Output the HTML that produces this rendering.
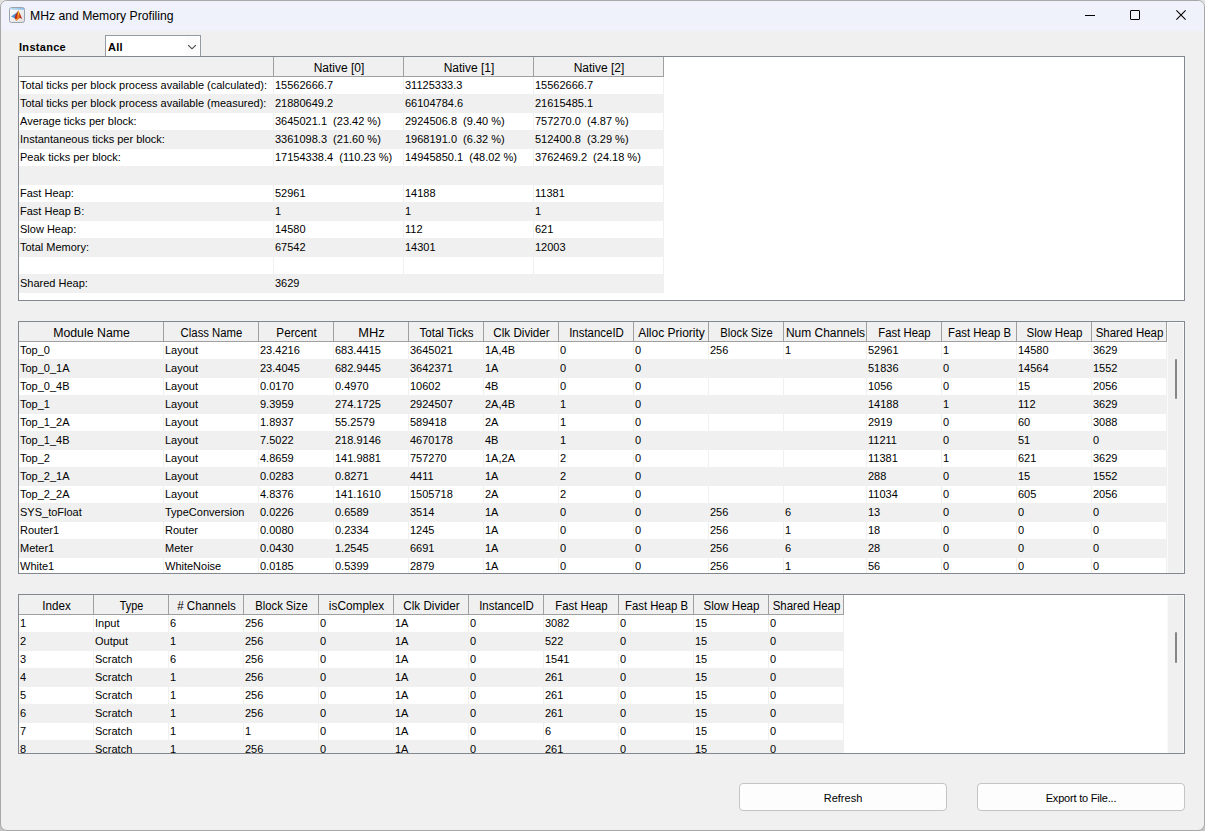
<!DOCTYPE html><html><head><meta charset="utf-8"><title>MHz and Memory Profiling</title><style>
*{margin:0;padding:0;box-sizing:content-box}
html,body{width:1205px;height:831px;overflow:hidden;background:linear-gradient(#e2e2e2,#c4c4c4);font-family:"Liberation Sans",sans-serif;color:#000}
#win{position:absolute;left:0;top:0;width:1203px;height:829px;border:1px solid #a8a8a8;border-radius:7px;background:#f0f0f0;overflow:hidden}
#title{position:absolute;left:0;top:0;width:1203px;height:30px;background:#eff2fa}
#ttxt{position:absolute;left:29px;top:8px;font-size:12.2px;line-height:15px;white-space:nowrap}
.tb{position:absolute;border:1px solid #828790;background:#fff;overflow:hidden}
.hbg{position:absolute;background:#f0f0f0}
.row{position:absolute;left:0;height:17px;border-bottom:1px solid #f0f0f0}
.cd{position:absolute;width:1px;background:#f0f0f0}
.hd{position:absolute;width:1px;background:#a0a0a0}
.hb{position:absolute;height:1px;background:#a0a0a0}
.ht{position:absolute;top:4px;text-align:center;font-size:12px;line-height:14px;white-space:nowrap}
.ct{position:absolute;font-size:11px;line-height:14px;padding-top:1px;white-space:nowrap}
.sb{position:absolute;background:#f0f0f0;border:1px solid #fafafa;border-bottom:none}
.sbl{position:absolute;width:1px;background:#fff}
.th{position:absolute;width:2px;background:#868686;border-radius:1px}
.btn{position:absolute;border:1px solid #c4c4c4;border-radius:4px;background:#fdfdfd;font-size:11px;text-align:center;line-height:28px}
</style></head><body>
<div id="win">
<div id="title">
<svg style="position:absolute;left:7px;top:5px" width="18" height="18" viewBox="0 0 18 18">
<defs><linearGradient id="ig" x1="0" y1="0" x2="1" y2="1"><stop offset="0" stop-color="#ffffff"/><stop offset="1" stop-color="#dedede"/></linearGradient>
<linearGradient id="bd" x1="0" y1="0" x2="1" y2="0"><stop offset="0" stop-color="#b0d8f4"/><stop offset="1" stop-color="#78b0de"/></linearGradient>
<linearGradient id="bw" x1="0" y1="0" x2="1" y2="1"><stop offset="0" stop-color="#6ab4ea"/><stop offset="1" stop-color="#2f74b8"/></linearGradient></defs>
<rect x="1.5" y="1.5" width="15" height="15" rx="2" fill="url(#ig)" stroke="#9aa3ad"/>
<rect x="2" y="2.2" width="14" height="1.4" fill="url(#bd)"/>
<path d="M3 10.4 L8.8 6.4 L10 9 L7 12.4 Z" fill="url(#bw)"/>
<path d="M7.2 9.4 L10.3 4.6 L12.2 8.2 L14.2 13 L12.2 11.9 L10.6 12.2 L8.2 14.8 L6.8 12 Z" fill="#b52c1a"/>
<path d="M9 10.6 L10.3 5 L11.6 9 L11.6 12 L8.6 14.6 Z" fill="#ea7424"/>
<path d="M9.9 6.4 L10.4 4.8 L11.2 7 L10.8 9.6 L10.1 9 Z" fill="#f5c52a"/>
<circle cx="8.6" cy="13.6" r="0.9" fill="#f4aa2c"/>
</svg>
<div id="ttxt">MHz and Memory Profiling</div>
<div style="position:absolute;left:1084px;top:14px;width:10px;height:1px;background:#000"></div>
<div style="position:absolute;left:1129px;top:9px;width:8px;height:8px;border:1px solid #000;border-radius:1px"></div>
<svg style="position:absolute;left:1174px;top:8px" width="12" height="12" viewBox="0 0 12 12"><path d="M1.4 1.4 L10.6 10.6 M10.6 1.4 L1.4 10.6" stroke="#000" stroke-width="1.1"/></svg>
</div>
</div>
<div style="position:absolute;left:19px;top:40px;font-size:11px;font-weight:bold;line-height:15px;letter-spacing:0.3px">Instance</div>
<div style="position:absolute;left:105px;top:35px;width:94px;height:21px;border:1px solid #959ba4;border-bottom:none;background:#fff"><div style="position:absolute;left:79px;top:1px;width:14px;height:18px;background:#fbfbfb"></div></div>
<div style="position:absolute;left:108px;top:40px;font-size:11px;font-weight:bold;line-height:15px;letter-spacing:0.3px">All</div>
<svg style="position:absolute;left:187px;top:44px" width="10" height="6" viewBox="0 0 10 6"><path d="M1.2 1.2 L5 4.8 L8.8 1.2" stroke="#444" fill="none" stroke-width="1.15"/></svg>
<div class="tb" style="left:18px;top:56px;width:1165px;height:243px">
<div class="hbg" style="left:0;top:0;width:644px;height:19px"></div>
<div class="row" style="top:20px;width:644px;background:#ffffff"></div>
<div class="row" style="top:38px;width:644px;background:#f0f0f0"></div>
<div class="row" style="top:56px;width:644px;background:#ffffff"></div>
<div class="row" style="top:74px;width:644px;background:#f0f0f0"></div>
<div class="row" style="top:92px;width:644px;background:#ffffff"></div>
<div class="row" style="top:110px;width:644px;background:#f0f0f0"></div>
<div class="row" style="top:128px;width:644px;background:#ffffff"></div>
<div class="row" style="top:146px;width:644px;background:#f0f0f0"></div>
<div class="row" style="top:164px;width:644px;background:#ffffff"></div>
<div class="row" style="top:182px;width:644px;background:#f0f0f0"></div>
<div class="row" style="top:200px;width:644px;background:#ffffff"></div>
<div class="row" style="top:218px;width:644px;background:#f0f0f0"></div>
<div class="cd" style="left:254px;top:20px;height:216px"></div>
<div class="cd" style="left:384px;top:20px;height:216px"></div>
<div class="cd" style="left:514px;top:20px;height:216px"></div>
<div class="cd" style="left:644px;top:20px;height:216px"></div>
<div class="hd" style="left:254px;top:0;height:19px"></div>
<div class="hd" style="left:384px;top:0;height:19px"></div>
<div class="hd" style="left:514px;top:0;height:19px"></div>
<div class="hd" style="left:644px;top:0;height:19px"></div>
<div class="hb" style="left:0;top:19px;width:645px"></div>
<div class="ht" style="left:255px;width:130px">Native [0]</div>
<div class="ht" style="left:385px;width:130px">Native [1]</div>
<div class="ht" style="left:515px;width:130px">Native [2]</div>
<div class="ct" style="left:1px;top:20px">Total ticks per block process available (calculated):</div>
<div class="ct" style="left:256px;top:20px">15562666.7</div>
<div class="ct" style="left:386px;top:20px">31125333.3</div>
<div class="ct" style="left:516px;top:20px">15562666.7</div>
<div class="ct" style="left:1px;top:38px">Total ticks per block process available (measured):</div>
<div class="ct" style="left:256px;top:38px">21880649.2</div>
<div class="ct" style="left:386px;top:38px">66104784.6</div>
<div class="ct" style="left:516px;top:38px">21615485.1</div>
<div class="ct" style="left:1px;top:56px">Average ticks per block:</div>
<div class="ct" style="left:256px;top:56px">3645021.1&nbsp; (23.42 %)</div>
<div class="ct" style="left:386px;top:56px">2924506.8&nbsp; (9.40 %)</div>
<div class="ct" style="left:516px;top:56px">757270.0&nbsp; (4.87 %)</div>
<div class="ct" style="left:1px;top:74px">Instantaneous ticks per block:</div>
<div class="ct" style="left:256px;top:74px">3361098.3&nbsp; (21.60 %)</div>
<div class="ct" style="left:386px;top:74px">1968191.0&nbsp; (6.32 %)</div>
<div class="ct" style="left:516px;top:74px">512400.8&nbsp; (3.29 %)</div>
<div class="ct" style="left:1px;top:92px">Peak ticks per block:</div>
<div class="ct" style="left:256px;top:92px">17154338.4&nbsp; (110.23 %)</div>
<div class="ct" style="left:386px;top:92px">14945850.1&nbsp; (48.02 %)</div>
<div class="ct" style="left:516px;top:92px">3762469.2&nbsp; (24.18 %)</div>
<div class="ct" style="left:1px;top:128px">Fast Heap:</div>
<div class="ct" style="left:256px;top:128px">52961</div>
<div class="ct" style="left:386px;top:128px">14188</div>
<div class="ct" style="left:516px;top:128px">11381</div>
<div class="ct" style="left:1px;top:146px">Fast Heap B:</div>
<div class="ct" style="left:256px;top:146px">1</div>
<div class="ct" style="left:386px;top:146px">1</div>
<div class="ct" style="left:516px;top:146px">1</div>
<div class="ct" style="left:1px;top:164px">Slow Heap:</div>
<div class="ct" style="left:256px;top:164px">14580</div>
<div class="ct" style="left:386px;top:164px">112</div>
<div class="ct" style="left:516px;top:164px">621</div>
<div class="ct" style="left:1px;top:182px">Total Memory:</div>
<div class="ct" style="left:256px;top:182px">67542</div>
<div class="ct" style="left:386px;top:182px">14301</div>
<div class="ct" style="left:516px;top:182px">12003</div>
<div class="ct" style="left:1px;top:218px">Shared Heap:</div>
<div class="ct" style="left:256px;top:218px">3629</div>
</div>
<div class="tb" style="left:18px;top:321px;width:1165px;height:251px">
<div class="sb" style="left:1148px;top:0;width:15px;height:250px"></div>
<div class="hbg" style="left:0;top:0;width:1147px;height:19px"></div>
<div class="row" style="top:20px;width:1147px;background:#ffffff"></div>
<div class="row" style="top:38px;width:1147px;background:#f0f0f0"></div>
<div class="row" style="top:56px;width:1147px;background:#ffffff"></div>
<div class="row" style="top:74px;width:1147px;background:#f0f0f0"></div>
<div class="row" style="top:92px;width:1147px;background:#ffffff"></div>
<div class="row" style="top:110px;width:1147px;background:#f0f0f0"></div>
<div class="row" style="top:128px;width:1147px;background:#ffffff"></div>
<div class="row" style="top:146px;width:1147px;background:#f0f0f0"></div>
<div class="row" style="top:164px;width:1147px;background:#ffffff"></div>
<div class="row" style="top:182px;width:1147px;background:#f0f0f0"></div>
<div class="row" style="top:200px;width:1147px;background:#ffffff"></div>
<div class="row" style="top:218px;width:1147px;background:#f0f0f0"></div>
<div class="row" style="top:236px;width:1147px;background:#ffffff"></div>
<div class="cd" style="left:144px;top:20px;height:231px"></div>
<div class="cd" style="left:239px;top:20px;height:231px"></div>
<div class="cd" style="left:314px;top:20px;height:231px"></div>
<div class="cd" style="left:389px;top:20px;height:231px"></div>
<div class="cd" style="left:464px;top:20px;height:231px"></div>
<div class="cd" style="left:539px;top:20px;height:231px"></div>
<div class="cd" style="left:614px;top:20px;height:231px"></div>
<div class="cd" style="left:689px;top:20px;height:231px"></div>
<div class="cd" style="left:764px;top:20px;height:231px"></div>
<div class="cd" style="left:847px;top:20px;height:231px"></div>
<div class="cd" style="left:922px;top:20px;height:231px"></div>
<div class="cd" style="left:997px;top:20px;height:231px"></div>
<div class="cd" style="left:1072px;top:20px;height:231px"></div>
<div class="cd" style="left:1147px;top:20px;height:231px"></div>
<div class="hd" style="left:144px;top:0;height:19px"></div>
<div class="hd" style="left:239px;top:0;height:19px"></div>
<div class="hd" style="left:314px;top:0;height:19px"></div>
<div class="hd" style="left:389px;top:0;height:19px"></div>
<div class="hd" style="left:464px;top:0;height:19px"></div>
<div class="hd" style="left:539px;top:0;height:19px"></div>
<div class="hd" style="left:614px;top:0;height:19px"></div>
<div class="hd" style="left:689px;top:0;height:19px"></div>
<div class="hd" style="left:764px;top:0;height:19px"></div>
<div class="hd" style="left:847px;top:0;height:19px"></div>
<div class="hd" style="left:922px;top:0;height:19px"></div>
<div class="hd" style="left:997px;top:0;height:19px"></div>
<div class="hd" style="left:1072px;top:0;height:19px"></div>
<div class="hd" style="left:1147px;top:0;height:19px"></div>
<div class="hb" style="left:0;top:19px;width:1148px"></div>
<div class="ht" style="left:0px;width:145px;transform:scaleX(1.027)">Module Name</div>
<div class="ht" style="left:145px;width:95px;transform:scaleX(0.945)">Class Name</div>
<div class="ht" style="left:240px;width:75px;transform:scaleX(0.975)">Percent</div>
<div class="ht" style="left:315px;width:75px;transform:scaleX(1.07)">MHz</div>
<div class="ht" style="left:390px;width:75px;transform:scaleX(0.964)">Total Ticks</div>
<div class="ht" style="left:465px;width:75px;transform:scaleX(0.972)">Clk Divider</div>
<div class="ht" style="left:540px;width:75px;transform:scaleX(0.954)">InstanceID</div>
<div class="ht" style="left:615px;width:75px">Alloc Priority</div>
<div class="ht" style="left:690px;width:75px;transform:scaleX(0.935)">Block Size</div>
<div class="ht" style="left:765px;width:83px;transform:scaleX(0.996)">Num Channels</div>
<div class="ht" style="left:848px;width:75px;transform:scaleX(0.944)">Fast Heap</div>
<div class="ht" style="left:923px;width:75px;transform:scaleX(0.945)">Fast Heap B</div>
<div class="ht" style="left:998px;width:75px;transform:scaleX(0.965)">Slow Heap</div>
<div class="ht" style="left:1073px;width:75px;transform:scaleX(0.957)">Shared Heap</div>
<div class="ct" style="left:1px;top:20px">Top_0</div>
<div class="ct" style="left:146px;top:20px">Layout</div>
<div class="ct" style="left:241px;top:20px">23.4216</div>
<div class="ct" style="left:316px;top:20px">683.4415</div>
<div class="ct" style="left:391px;top:20px">3645021</div>
<div class="ct" style="left:466px;top:20px">1A,4B</div>
<div class="ct" style="left:541px;top:20px">0</div>
<div class="ct" style="left:616px;top:20px">0</div>
<div class="ct" style="left:691px;top:20px">256</div>
<div class="ct" style="left:766px;top:20px">1</div>
<div class="ct" style="left:849px;top:20px">52961</div>
<div class="ct" style="left:924px;top:20px">1</div>
<div class="ct" style="left:999px;top:20px">14580</div>
<div class="ct" style="left:1074px;top:20px">3629</div>
<div class="ct" style="left:1px;top:38px">Top_0_1A</div>
<div class="ct" style="left:146px;top:38px">Layout</div>
<div class="ct" style="left:241px;top:38px">23.4045</div>
<div class="ct" style="left:316px;top:38px">682.9445</div>
<div class="ct" style="left:391px;top:38px">3642371</div>
<div class="ct" style="left:466px;top:38px">1A</div>
<div class="ct" style="left:541px;top:38px">0</div>
<div class="ct" style="left:616px;top:38px">0</div>
<div class="ct" style="left:849px;top:38px">51836</div>
<div class="ct" style="left:924px;top:38px">0</div>
<div class="ct" style="left:999px;top:38px">14564</div>
<div class="ct" style="left:1074px;top:38px">1552</div>
<div class="ct" style="left:1px;top:56px">Top_0_4B</div>
<div class="ct" style="left:146px;top:56px">Layout</div>
<div class="ct" style="left:241px;top:56px">0.0170</div>
<div class="ct" style="left:316px;top:56px">0.4970</div>
<div class="ct" style="left:391px;top:56px">10602</div>
<div class="ct" style="left:466px;top:56px">4B</div>
<div class="ct" style="left:541px;top:56px">0</div>
<div class="ct" style="left:616px;top:56px">0</div>
<div class="ct" style="left:849px;top:56px">1056</div>
<div class="ct" style="left:924px;top:56px">0</div>
<div class="ct" style="left:999px;top:56px">15</div>
<div class="ct" style="left:1074px;top:56px">2056</div>
<div class="ct" style="left:1px;top:74px">Top_1</div>
<div class="ct" style="left:146px;top:74px">Layout</div>
<div class="ct" style="left:241px;top:74px">9.3959</div>
<div class="ct" style="left:316px;top:74px">274.1725</div>
<div class="ct" style="left:391px;top:74px">2924507</div>
<div class="ct" style="left:466px;top:74px">2A,4B</div>
<div class="ct" style="left:541px;top:74px">1</div>
<div class="ct" style="left:616px;top:74px">0</div>
<div class="ct" style="left:849px;top:74px">14188</div>
<div class="ct" style="left:924px;top:74px">1</div>
<div class="ct" style="left:999px;top:74px">112</div>
<div class="ct" style="left:1074px;top:74px">3629</div>
<div class="ct" style="left:1px;top:92px">Top_1_2A</div>
<div class="ct" style="left:146px;top:92px">Layout</div>
<div class="ct" style="left:241px;top:92px">1.8937</div>
<div class="ct" style="left:316px;top:92px">55.2579</div>
<div class="ct" style="left:391px;top:92px">589418</div>
<div class="ct" style="left:466px;top:92px">2A</div>
<div class="ct" style="left:541px;top:92px">1</div>
<div class="ct" style="left:616px;top:92px">0</div>
<div class="ct" style="left:849px;top:92px">2919</div>
<div class="ct" style="left:924px;top:92px">0</div>
<div class="ct" style="left:999px;top:92px">60</div>
<div class="ct" style="left:1074px;top:92px">3088</div>
<div class="ct" style="left:1px;top:110px">Top_1_4B</div>
<div class="ct" style="left:146px;top:110px">Layout</div>
<div class="ct" style="left:241px;top:110px">7.5022</div>
<div class="ct" style="left:316px;top:110px">218.9146</div>
<div class="ct" style="left:391px;top:110px">4670178</div>
<div class="ct" style="left:466px;top:110px">4B</div>
<div class="ct" style="left:541px;top:110px">1</div>
<div class="ct" style="left:616px;top:110px">0</div>
<div class="ct" style="left:849px;top:110px">11211</div>
<div class="ct" style="left:924px;top:110px">0</div>
<div class="ct" style="left:999px;top:110px">51</div>
<div class="ct" style="left:1074px;top:110px">0</div>
<div class="ct" style="left:1px;top:128px">Top_2</div>
<div class="ct" style="left:146px;top:128px">Layout</div>
<div class="ct" style="left:241px;top:128px">4.8659</div>
<div class="ct" style="left:316px;top:128px">141.9881</div>
<div class="ct" style="left:391px;top:128px">757270</div>
<div class="ct" style="left:466px;top:128px">1A,2A</div>
<div class="ct" style="left:541px;top:128px">2</div>
<div class="ct" style="left:616px;top:128px">0</div>
<div class="ct" style="left:849px;top:128px">11381</div>
<div class="ct" style="left:924px;top:128px">1</div>
<div class="ct" style="left:999px;top:128px">621</div>
<div class="ct" style="left:1074px;top:128px">3629</div>
<div class="ct" style="left:1px;top:146px">Top_2_1A</div>
<div class="ct" style="left:146px;top:146px">Layout</div>
<div class="ct" style="left:241px;top:146px">0.0283</div>
<div class="ct" style="left:316px;top:146px">0.8271</div>
<div class="ct" style="left:391px;top:146px">4411</div>
<div class="ct" style="left:466px;top:146px">1A</div>
<div class="ct" style="left:541px;top:146px">2</div>
<div class="ct" style="left:616px;top:146px">0</div>
<div class="ct" style="left:849px;top:146px">288</div>
<div class="ct" style="left:924px;top:146px">0</div>
<div class="ct" style="left:999px;top:146px">15</div>
<div class="ct" style="left:1074px;top:146px">1552</div>
<div class="ct" style="left:1px;top:164px">Top_2_2A</div>
<div class="ct" style="left:146px;top:164px">Layout</div>
<div class="ct" style="left:241px;top:164px">4.8376</div>
<div class="ct" style="left:316px;top:164px">141.1610</div>
<div class="ct" style="left:391px;top:164px">1505718</div>
<div class="ct" style="left:466px;top:164px">2A</div>
<div class="ct" style="left:541px;top:164px">2</div>
<div class="ct" style="left:616px;top:164px">0</div>
<div class="ct" style="left:849px;top:164px">11034</div>
<div class="ct" style="left:924px;top:164px">0</div>
<div class="ct" style="left:999px;top:164px">605</div>
<div class="ct" style="left:1074px;top:164px">2056</div>
<div class="ct" style="left:1px;top:182px">SYS_toFloat</div>
<div class="ct" style="left:146px;top:182px">TypeConversion</div>
<div class="ct" style="left:241px;top:182px">0.0226</div>
<div class="ct" style="left:316px;top:182px">0.6589</div>
<div class="ct" style="left:391px;top:182px">3514</div>
<div class="ct" style="left:466px;top:182px">1A</div>
<div class="ct" style="left:541px;top:182px">0</div>
<div class="ct" style="left:616px;top:182px">0</div>
<div class="ct" style="left:691px;top:182px">256</div>
<div class="ct" style="left:766px;top:182px">6</div>
<div class="ct" style="left:849px;top:182px">13</div>
<div class="ct" style="left:924px;top:182px">0</div>
<div class="ct" style="left:999px;top:182px">0</div>
<div class="ct" style="left:1074px;top:182px">0</div>
<div class="ct" style="left:1px;top:200px">Router1</div>
<div class="ct" style="left:146px;top:200px">Router</div>
<div class="ct" style="left:241px;top:200px">0.0080</div>
<div class="ct" style="left:316px;top:200px">0.2334</div>
<div class="ct" style="left:391px;top:200px">1245</div>
<div class="ct" style="left:466px;top:200px">1A</div>
<div class="ct" style="left:541px;top:200px">0</div>
<div class="ct" style="left:616px;top:200px">0</div>
<div class="ct" style="left:691px;top:200px">256</div>
<div class="ct" style="left:766px;top:200px">1</div>
<div class="ct" style="left:849px;top:200px">18</div>
<div class="ct" style="left:924px;top:200px">0</div>
<div class="ct" style="left:999px;top:200px">0</div>
<div class="ct" style="left:1074px;top:200px">0</div>
<div class="ct" style="left:1px;top:218px">Meter1</div>
<div class="ct" style="left:146px;top:218px">Meter</div>
<div class="ct" style="left:241px;top:218px">0.0430</div>
<div class="ct" style="left:316px;top:218px">1.2545</div>
<div class="ct" style="left:391px;top:218px">6691</div>
<div class="ct" style="left:466px;top:218px">1A</div>
<div class="ct" style="left:541px;top:218px">0</div>
<div class="ct" style="left:616px;top:218px">0</div>
<div class="ct" style="left:691px;top:218px">256</div>
<div class="ct" style="left:766px;top:218px">6</div>
<div class="ct" style="left:849px;top:218px">28</div>
<div class="ct" style="left:924px;top:218px">0</div>
<div class="ct" style="left:999px;top:218px">0</div>
<div class="ct" style="left:1074px;top:218px">0</div>
<div class="ct" style="left:1px;top:236px">White1</div>
<div class="ct" style="left:146px;top:236px">WhiteNoise</div>
<div class="ct" style="left:241px;top:236px">0.0185</div>
<div class="ct" style="left:316px;top:236px">0.5399</div>
<div class="ct" style="left:391px;top:236px">2879</div>
<div class="ct" style="left:466px;top:236px">1A</div>
<div class="ct" style="left:541px;top:236px">0</div>
<div class="ct" style="left:616px;top:236px">0</div>
<div class="ct" style="left:691px;top:236px">256</div>
<div class="ct" style="left:766px;top:236px">1</div>
<div class="ct" style="left:849px;top:236px">56</div>
<div class="ct" style="left:924px;top:236px">0</div>
<div class="ct" style="left:999px;top:236px">0</div>
<div class="ct" style="left:1074px;top:236px">0</div>
<div class="th" style="left:1156px;top:37px;height:40px"></div>
</div>
<div class="tb" style="left:18px;top:594px;width:1165px;height:158px">
<div class="sb" style="left:1148px;top:0;width:15px;height:157px"></div>
<div class="hbg" style="left:0;top:0;width:824px;height:19px"></div>
<div class="row" style="top:20px;width:824px;background:#ffffff"></div>
<div class="row" style="top:38px;width:824px;background:#f0f0f0"></div>
<div class="row" style="top:56px;width:824px;background:#ffffff"></div>
<div class="row" style="top:74px;width:824px;background:#f0f0f0"></div>
<div class="row" style="top:92px;width:824px;background:#ffffff"></div>
<div class="row" style="top:110px;width:824px;background:#f0f0f0"></div>
<div class="row" style="top:128px;width:824px;background:#ffffff"></div>
<div class="row" style="top:146px;width:824px;background:#f0f0f0"></div>
<div class="cd" style="left:74px;top:20px;height:138px"></div>
<div class="cd" style="left:149px;top:20px;height:138px"></div>
<div class="cd" style="left:224px;top:20px;height:138px"></div>
<div class="cd" style="left:299px;top:20px;height:138px"></div>
<div class="cd" style="left:374px;top:20px;height:138px"></div>
<div class="cd" style="left:449px;top:20px;height:138px"></div>
<div class="cd" style="left:524px;top:20px;height:138px"></div>
<div class="cd" style="left:599px;top:20px;height:138px"></div>
<div class="cd" style="left:674px;top:20px;height:138px"></div>
<div class="cd" style="left:749px;top:20px;height:138px"></div>
<div class="cd" style="left:824px;top:20px;height:138px"></div>
<div class="hd" style="left:74px;top:0;height:19px"></div>
<div class="hd" style="left:149px;top:0;height:19px"></div>
<div class="hd" style="left:224px;top:0;height:19px"></div>
<div class="hd" style="left:299px;top:0;height:19px"></div>
<div class="hd" style="left:374px;top:0;height:19px"></div>
<div class="hd" style="left:449px;top:0;height:19px"></div>
<div class="hd" style="left:524px;top:0;height:19px"></div>
<div class="hd" style="left:599px;top:0;height:19px"></div>
<div class="hd" style="left:674px;top:0;height:19px"></div>
<div class="hd" style="left:749px;top:0;height:19px"></div>
<div class="hd" style="left:824px;top:0;height:19px"></div>
<div class="hb" style="left:0;top:19px;width:825px"></div>
<div class="ht" style="left:0px;width:75px;transform:scaleX(0.971)">Index</div>
<div class="ht" style="left:75px;width:75px;transform:scaleX(0.9)">Type</div>
<div class="ht" style="left:150px;width:75px;transform:scaleX(0.967)"># Channels</div>
<div class="ht" style="left:225px;width:75px;transform:scaleX(0.935)">Block Size</div>
<div class="ht" style="left:300px;width:75px;transform:scaleX(0.987)">isComplex</div>
<div class="ht" style="left:375px;width:75px;transform:scaleX(0.972)">Clk Divider</div>
<div class="ht" style="left:450px;width:75px;transform:scaleX(0.954)">InstanceID</div>
<div class="ht" style="left:525px;width:75px;transform:scaleX(0.944)">Fast Heap</div>
<div class="ht" style="left:600px;width:75px;transform:scaleX(0.945)">Fast Heap B</div>
<div class="ht" style="left:675px;width:75px;transform:scaleX(0.965)">Slow Heap</div>
<div class="ht" style="left:750px;width:75px;transform:scaleX(0.957)">Shared Heap</div>
<div class="ct" style="left:1px;top:20px">1</div>
<div class="ct" style="left:76px;top:20px">Input</div>
<div class="ct" style="left:151px;top:20px">6</div>
<div class="ct" style="left:226px;top:20px">256</div>
<div class="ct" style="left:301px;top:20px">0</div>
<div class="ct" style="left:376px;top:20px">1A</div>
<div class="ct" style="left:451px;top:20px">0</div>
<div class="ct" style="left:526px;top:20px">3082</div>
<div class="ct" style="left:601px;top:20px">0</div>
<div class="ct" style="left:676px;top:20px">15</div>
<div class="ct" style="left:751px;top:20px">0</div>
<div class="ct" style="left:1px;top:38px">2</div>
<div class="ct" style="left:76px;top:38px">Output</div>
<div class="ct" style="left:151px;top:38px">1</div>
<div class="ct" style="left:226px;top:38px">256</div>
<div class="ct" style="left:301px;top:38px">0</div>
<div class="ct" style="left:376px;top:38px">1A</div>
<div class="ct" style="left:451px;top:38px">0</div>
<div class="ct" style="left:526px;top:38px">522</div>
<div class="ct" style="left:601px;top:38px">0</div>
<div class="ct" style="left:676px;top:38px">15</div>
<div class="ct" style="left:751px;top:38px">0</div>
<div class="ct" style="left:1px;top:56px">3</div>
<div class="ct" style="left:76px;top:56px">Scratch</div>
<div class="ct" style="left:151px;top:56px">6</div>
<div class="ct" style="left:226px;top:56px">256</div>
<div class="ct" style="left:301px;top:56px">0</div>
<div class="ct" style="left:376px;top:56px">1A</div>
<div class="ct" style="left:451px;top:56px">0</div>
<div class="ct" style="left:526px;top:56px">1541</div>
<div class="ct" style="left:601px;top:56px">0</div>
<div class="ct" style="left:676px;top:56px">15</div>
<div class="ct" style="left:751px;top:56px">0</div>
<div class="ct" style="left:1px;top:74px">4</div>
<div class="ct" style="left:76px;top:74px">Scratch</div>
<div class="ct" style="left:151px;top:74px">1</div>
<div class="ct" style="left:226px;top:74px">256</div>
<div class="ct" style="left:301px;top:74px">0</div>
<div class="ct" style="left:376px;top:74px">1A</div>
<div class="ct" style="left:451px;top:74px">0</div>
<div class="ct" style="left:526px;top:74px">261</div>
<div class="ct" style="left:601px;top:74px">0</div>
<div class="ct" style="left:676px;top:74px">15</div>
<div class="ct" style="left:751px;top:74px">0</div>
<div class="ct" style="left:1px;top:92px">5</div>
<div class="ct" style="left:76px;top:92px">Scratch</div>
<div class="ct" style="left:151px;top:92px">1</div>
<div class="ct" style="left:226px;top:92px">256</div>
<div class="ct" style="left:301px;top:92px">0</div>
<div class="ct" style="left:376px;top:92px">1A</div>
<div class="ct" style="left:451px;top:92px">0</div>
<div class="ct" style="left:526px;top:92px">261</div>
<div class="ct" style="left:601px;top:92px">0</div>
<div class="ct" style="left:676px;top:92px">15</div>
<div class="ct" style="left:751px;top:92px">0</div>
<div class="ct" style="left:1px;top:110px">6</div>
<div class="ct" style="left:76px;top:110px">Scratch</div>
<div class="ct" style="left:151px;top:110px">1</div>
<div class="ct" style="left:226px;top:110px">256</div>
<div class="ct" style="left:301px;top:110px">0</div>
<div class="ct" style="left:376px;top:110px">1A</div>
<div class="ct" style="left:451px;top:110px">0</div>
<div class="ct" style="left:526px;top:110px">261</div>
<div class="ct" style="left:601px;top:110px">0</div>
<div class="ct" style="left:676px;top:110px">15</div>
<div class="ct" style="left:751px;top:110px">0</div>
<div class="ct" style="left:1px;top:128px">7</div>
<div class="ct" style="left:76px;top:128px">Scratch</div>
<div class="ct" style="left:151px;top:128px">1</div>
<div class="ct" style="left:226px;top:128px">1</div>
<div class="ct" style="left:301px;top:128px">0</div>
<div class="ct" style="left:376px;top:128px">1A</div>
<div class="ct" style="left:451px;top:128px">0</div>
<div class="ct" style="left:526px;top:128px">6</div>
<div class="ct" style="left:601px;top:128px">0</div>
<div class="ct" style="left:676px;top:128px">15</div>
<div class="ct" style="left:751px;top:128px">0</div>
<div class="ct" style="left:1px;top:146px">8</div>
<div class="ct" style="left:76px;top:146px">Scratch</div>
<div class="ct" style="left:151px;top:146px">1</div>
<div class="ct" style="left:226px;top:146px">256</div>
<div class="ct" style="left:301px;top:146px">0</div>
<div class="ct" style="left:376px;top:146px">1A</div>
<div class="ct" style="left:451px;top:146px">0</div>
<div class="ct" style="left:526px;top:146px">261</div>
<div class="ct" style="left:601px;top:146px">0</div>
<div class="ct" style="left:676px;top:146px">15</div>
<div class="ct" style="left:751px;top:146px">0</div>
<div class="th" style="left:1156px;top:37px;height:31px"></div>
</div>
<div class="btn" style="left:739px;top:783px;width:206px;height:26px">Refresh</div>
<div class="btn" style="left:977px;top:783px;width:206px;height:26px;letter-spacing:-0.2px">Export to File...</div>
</body></html>
